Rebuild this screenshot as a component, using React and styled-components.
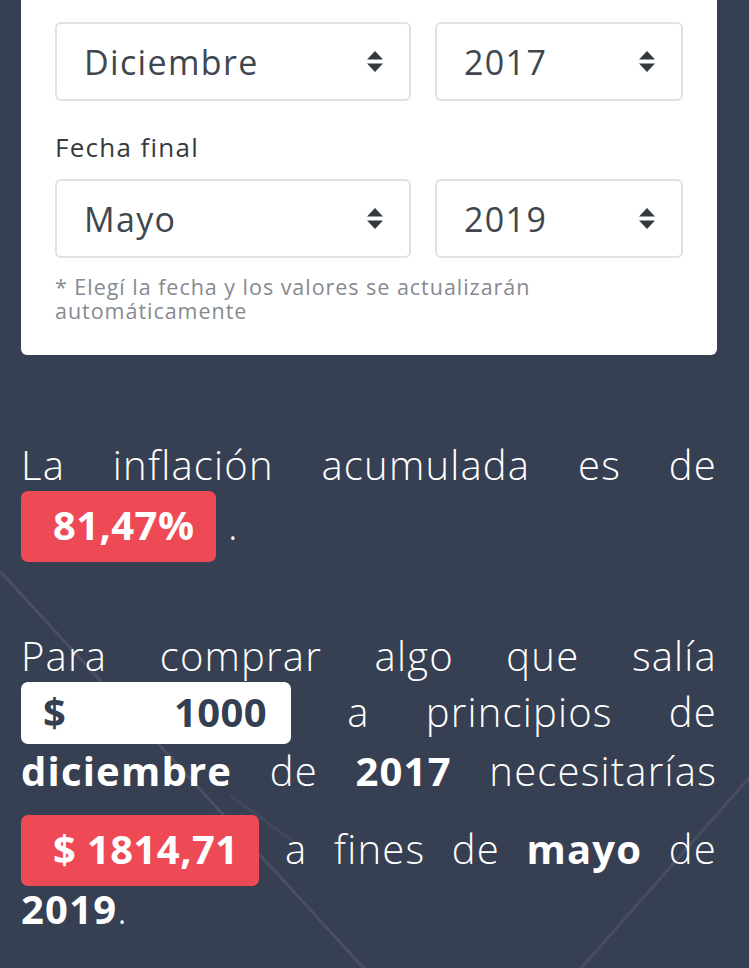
import React from "react";
import styled, { createGlobalStyle } from "styled-components";

const Global = createGlobalStyle`
  html, body { margin: 0; padding: 0; background: #373f52; }
  body { font-family: "Open Sans", "Liberation Sans", sans-serif; }
  * { box-sizing: border-box; }
`;

const Page = styled.div`
  position: relative;
  min-height: 968px;
  overflow: hidden;
  padding: 0 32px 40px 21px;
  background: #373f52;
`;

const Decor = styled.svg`
  position: absolute;
  inset: 0;
  width: 100%;
  height: 100%;
  pointer-events: none;
  z-index: 0;
`;

const Content = styled.div`
  position: relative;
  z-index: 1;
`;

const Card = styled.section`
  background: #ffffff;
  border-radius: 0 0 6px 6px;
  padding: 22px 34px 32px 34px;
`;

const SelectRow = styled.div`
  display: grid;
  grid-template-columns: 1fr 248px;
  gap: 24px;
`;

const SelectBox = styled.div`
  height: 79px;
  border: 2px solid #dfe2e6;
  border-radius: 6px;
  padding: 0 26px 0 27px;
  display: flex;
  align-items: center;
  justify-content: space-between;
  font-size: 34px;
  letter-spacing: 0.04em;
  color: #40464e;
`;

const Label = styled.div`
  margin: 31px 0 16px;
  font-size: 26px;
  line-height: 31px;
  letter-spacing: 0.05em;
  color: #343a40;
`;

const Note = styled.p`
  margin: 17px 0 0;
  font-size: 21.5px;
  line-height: 24px;
  letter-spacing: 0.045em;
  color: #868a90;
`;

const Para = styled.p`
  margin: ${(p) => p.$top}px 0 0;
  font-size: 40px;
  font-weight: 300;
  line-height: 53px;
  letter-spacing: 0.03em;
  color: #ffffff;
  text-align: justify;
  text-align-last: ${(p) => (p.$lastJustify ? "justify" : "auto")};
  b { font-weight: 700; }
`;

const Badge = styled.span`
  display: inline-block;
  font-weight: 700;
  background: #ee4a56;
  color: #ffffff;
  border-radius: 7px;
  line-height: 67px;
  padding: 0 ${(p) => p.$pr}px 4px 32px;
  margin: ${(p) => p.$mt || 0}px 0 ${(p) => p.$mb || 0}px;
  letter-spacing: 0.01em;
`;

const AmountInput = styled.span`
  display: inline-flex;
  justify-content: space-between;
  width: 270px;
  font-weight: 700;
  background: #ffffff;
  color: #353f52;
  border-radius: 7px;
  line-height: 59px;
  padding: 0 24px 3px 22px;
  letter-spacing: 0.01em;
`;

const Arrows = () => (
  <svg width="16" height="21" viewBox="0 0 16 21">
    <polygon points="8,0 16,8.5 0,8.5" fill="#343a40" />
    <polygon points="0,12.5 16,12.5 8,21" fill="#343a40" />
  </svg>
);

const Select = ({ value }) => (
  <SelectBox>
    <span>{value}</span>
    <Arrows />
  </SelectBox>
);

export default function App() {
  return (
    <>
      <Global />
      <Page>
        <Decor viewBox="0 0 749 968" preserveAspectRatio="none">
          <line x1="0" y1="567" x2="370" y2="968" stroke="rgba(255,255,255,0.09)" strokeWidth="3" />
          <line x1="760" y1="760" x2="575" y2="968" stroke="rgba(255,255,255,0.08)" strokeWidth="3" />
          <line x1="230" y1="790" x2="300" y2="840" stroke="rgba(255,255,255,0.05)" strokeWidth="3" />
        </Decor>
        <Content>
          <Card>
            <SelectRow>
              <Select value="Diciembre" />
              <Select value="2017" />
            </SelectRow>
            <Label>Fecha final</Label>
            <SelectRow>
              <Select value="Mayo" />
              <Select value="2019" />
            </SelectRow>
            <Note>* Elegí la fecha y los valores se actualizarán automáticamente</Note>
          </Card>

          <Para $top={83}>
            La inflación acumulada es de <Badge $pr={22}>81,47%</Badge> .
          </Para>

          <Para $top={67} $lastJustify>
            Para comprar algo que salía
            <br />
            <AmountInput>
              <span>$</span>
              <span>1000</span>
            </AmountInput>{" "}
            a principios de
            <br />
            <b>diciembre</b> de <b>2017</b> necesitarías
            <br />
            <Badge $pr={20} $mt={18} $mb={-4}>$ 1814,71</Badge> a fines de <b>mayo</b> de
            <br />
            <b>2019</b>.
          </Para>
        </Content>
      </Page>
    </>
  );
}
